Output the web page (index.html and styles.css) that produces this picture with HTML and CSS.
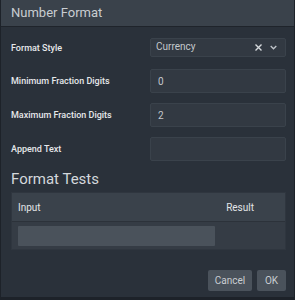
FILE: index.html
```html
<!DOCTYPE html>
<html lang="en">
<head>
  <meta charset="UTF-8" />
  <title>Number Format</title>
  <link rel="stylesheet" href="styles.css">
</head>
<body>
  <div class="dialog">
    <div class="dialog-header">Number Format</div>
    <div class="dialog-body">
      <div class="field first">
        <label>Format Style</label>
        <div class="select">
          <span>Currency</span>
          <span class="select-icons">
            <svg width="7" height="7" viewBox="0 0 7 7"><path d="M0.5 0.5L6.5 6.5M6.5 0.5L0.5 6.5" stroke="#d6dadd" stroke-width="1.4"/></svg>
            <svg width="7" height="5" viewBox="0 0 7 5"><path d="M0.7 1L3.5 3.8L6.3 1" stroke="#c0c5ca" stroke-width="1.3" fill="none"/></svg>
          </span>
        </div>
      </div>
      <div class="field">
        <label>Minimum Fraction Digits</label>
        <div class="input">0</div>
      </div>
      <div class="field">
        <label>Maximum Fraction Digits</label>
        <div class="input">2</div>
      </div>
      <div class="field last">
        <label>Append Text</label>
        <div class="input"></div>
      </div>

      <h2>Format Tests</h2>
      <div class="tests">
        <div class="tests-head">
          <span>Input</span>
          <span>Result</span>
        </div>
        <div class="tests-row">
          <div class="test-input"></div>
        </div>
      </div>

      <div class="buttons">
        <button class="cancel">Cancel</button>
        <button class="ok">OK</button>
      </div>
    </div>
  </div>
</body>
</html>
```

FILE: styles.css
```css
body {
  margin: 0;
  background: #1d2229;
  font-family: Roboto, "Liberation Sans", sans-serif;
  color: #e2e5e8;
}
.dialog {
  margin-left: 1px;
  width: 293px;
  height: 297px;
  background: #2a313a;
}
.dialog-header {
  height: 26px;
  line-height: 26px;
  padding-left: 10px;
  background: #3a424b;
  border-bottom: 1px solid #1f242b;
  font-size: 13px;
  font-weight: 400;
  color: #c9cdd1;
}
.dialog-body {
  padding: 11px 8px 0 9px;
}
.field {
  display: flex;
  align-items: center;
  justify-content: space-between;
  height: 24px;
  margin-bottom: 10px;
}
.field.first {
  height: 19px;
  margin-bottom: 12px;
}
.field.last {
  margin-bottom: 0;
}
.field label {
  padding-left: 1px;
  font-size: 9px;
  font-weight: 500;
  color: #e6e8ea;
}
.select, .input {
  box-sizing: border-box;
  width: 136px;
  height: 24px;
  background: #323942;
  border: 1px solid #3a424b;
  border-radius: 2px;
  font-size: 10px;
  color: #c4c8cc;
  padding: 0 7px;
  display: flex;
  align-items: center;
}
.select {
  height: 19px;
  padding: 0 8px 0 5px;
  justify-content: space-between;
}
.select span:first-child {
  margin-top: -3px;
}
.select-icons {
  display: flex;
  align-items: center;
  gap: 8px;
}
h2 {
  margin: 9px 0 4px 1px;
  height: 18px;
  line-height: 18px;
  font-size: 15px;
  font-weight: 400;
  color: #d4d8dc;
}
.tests {
  background: #353c45;
  border: 1px solid #2f363f;
  margin-left: 1px;
}
.tests-head {
  display: flex;
  justify-content: space-between;
  align-items: center;
  height: 28px;
  padding: 0 31px 0 6px;
  background: #3a424b;
  border-bottom: 1px solid #2c323a;
  font-size: 10px;
  color: #e2e5e8;
}
.tests-row {
  padding: 4px 6px 3px;
}
.test-input {
  width: 197px;
  height: 20px;
  background: #4a525b;
  border-radius: 1px;
}
.buttons {
  display: flex;
  justify-content: flex-end;
  gap: 5px;
  margin-top: 20px;
}
.buttons button {
  height: 21px;
  padding: 0;
  background: #4a525b;
  border: none;
  border-radius: 2px;
  font-family: Roboto, "Liberation Sans", sans-serif;
  font-size: 10px;
  color: #c9cdd1;
}
.buttons .cancel {
  width: 44px;
}
.buttons .ok {
  width: 29px;
}
```
